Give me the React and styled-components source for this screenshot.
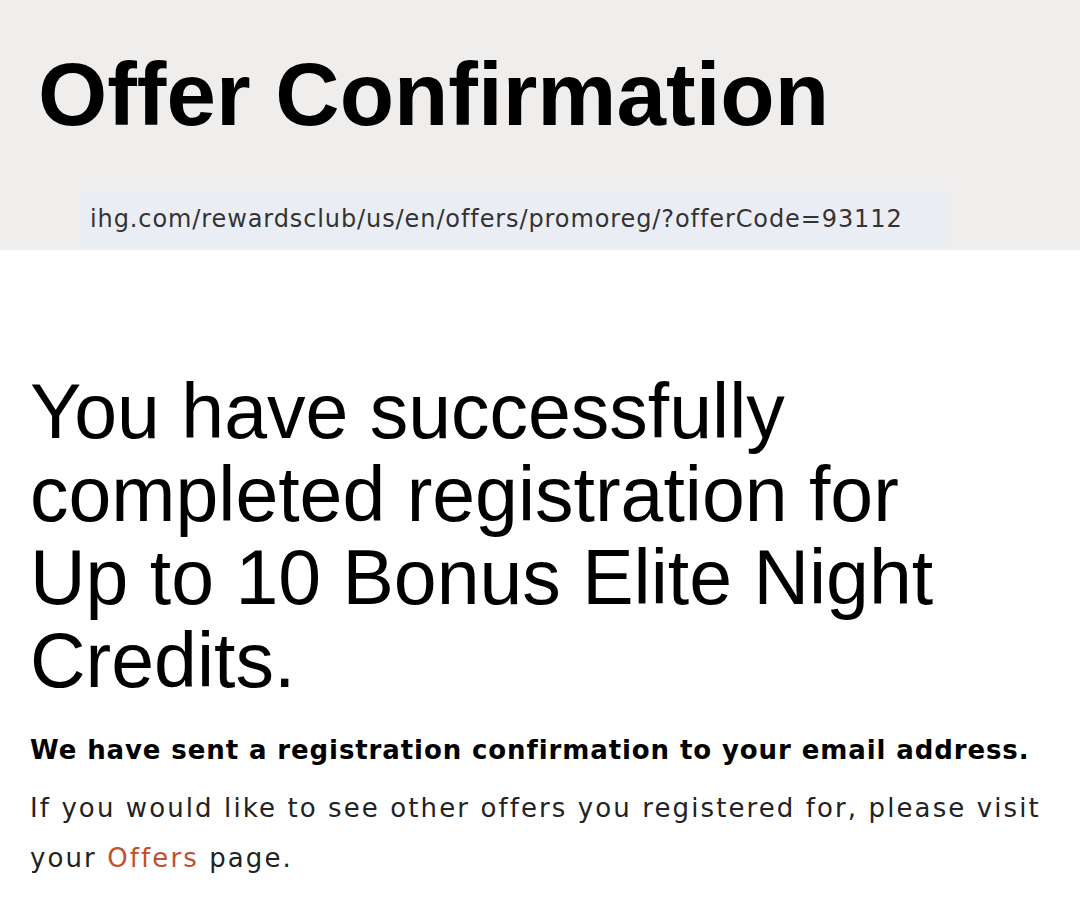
import React from "react";
import styled, { createGlobalStyle } from "styled-components";

const GlobalStyle = createGlobalStyle`
  html, body {
    margin: 0;
    padding: 0;
    background: #ffffff;
    font-family: "Liberation Sans", Arial, sans-serif;
  }
`;

const Page = styled.div`
  width: 1080px;
  min-height: 924px;
  display: flex;
  flex-direction: column;
`;

const Header = styled.header`
  background-color: #efeeed;
  height: 250px;
  box-sizing: border-box;
  padding: 46px 0 0 38px;
  display: flex;
  flex-direction: column;
`;

const Title = styled.h1`
  margin: 0;
  font-size: 89px;
  font-weight: 700;
  line-height: 96px;
  color: #000;
`;

const UrlBar = styled.div`
  margin: 48px 0 0 42px;
  width: 868px;
  height: 57px;
  box-sizing: border-box;
  padding: 0 10px;
  display: flex;
  align-items: center;
  background-color: #ebedf5;
  color: #333;
  font-family: "DejaVu Sans", sans-serif;
  font-size: 24px;
  letter-spacing: 0.9px;
`;

const Content = styled.main`
  padding: 120px 30px 0 30px;
`;

const Headline = styled.h2`
  margin: 0;
  font-size: 77px;
  font-weight: 400;
  line-height: 83px;
  color: #000;
  max-width: 980px;
`;

const Lead = styled.p`
  margin: 33px 0 0;
  font-family: "DejaVu Sans", sans-serif;
  font-size: 26px;
  font-weight: 700;
  letter-spacing: 0.9px;
  color: #000;
`;

const Body = styled.p`
  margin: 18px 0 0;
  font-family: "DejaVu Sans", sans-serif;
  font-size: 26px;
  line-height: 50px;
  letter-spacing: 2.1px;
  color: #222;
  max-width: 1040px;
`;

const OfferLink = styled.a`
  color: #c1502d;
  text-decoration: none;
`;

export default function App() {
  return (
    <Page>
      <GlobalStyle />
      <Header>
        <Title>Offer Confirmation</Title>
        <UrlBar>ihg.com/rewardsclub/us/en/offers/promoreg/?offerCode=93112</UrlBar>
      </Header>
      <Content>
        <Headline>
          You have successfully completed registration for Up to 10 Bonus Elite Night Credits.
        </Headline>
        <Lead>We have sent a registration confirmation to your email address.</Lead>
        <Body>
          If you would like to see other offers you registered for, please visit your{" "}
          <OfferLink href="#">Offers</OfferLink> page.
        </Body>
      </Content>
    </Page>
  );
}
